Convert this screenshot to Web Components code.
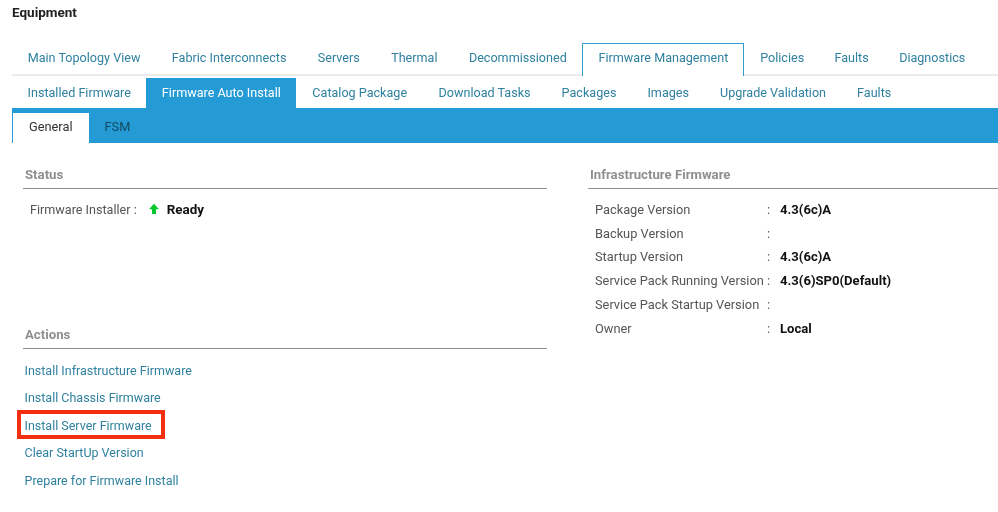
<!DOCTYPE html>
<html><head><meta charset="utf-8"><style>
html,body{margin:0;background:#fff;}
body{font:12.6px Roboto,"Liberation Sans",sans-serif;color:#333;width:998px;height:512px;overflow:hidden;}
</style></head><body>
<fw-page></fw-page>
<script>
const base=`*,*::after{box-sizing:border-box}`;
class FwTab extends HTMLElement{
  constructor(){super();this.attachShadow({mode:'open'}).innerHTML=`<style>${base}
  :host{display:flex;align-items:center;padding:0 var(--pad,15.5px) var(--pb,0) var(--pad,15.5px);color:var(--tc,#2f819f);white-space:nowrap;height:100%;}
  :host([active]){color:var(--ac,#2f819f);background:var(--abg,#fff);border:var(--abd,none);border-bottom:none;padding:0 calc(var(--pad,15.5px) - var(--aw,0px)) var(--apb,var(--pb,0));}
  </style><slot></slot>`;}
}
customElements.define('fw-tab',FwTab);
class FwTabs extends HTMLElement{
  constructor(){super();this.attachShadow({mode:'open'}).innerHTML=`<style>${base}
  :host{display:flex;}
  </style><slot></slot>`;}
}
customElements.define('fw-tabs',FwTabs);
class FwSection extends HTMLElement{
  constructor(){super();this.attachShadow({mode:'open'}).innerHTML=`<style>${base}
  :host{display:block;}
  h3{margin:0;padding:0 0 7px 2px;height:22px;font:700 13.2px/15px Roboto,sans-serif;color:#8f8f8f;border-bottom:1px solid #8f8f8f;}
  </style><h3><slot name="title"></slot></h3><slot></slot>`;}
}
customElements.define('fw-section',FwSection);
class FwRow extends HTMLElement{
  constructor(){super();this.attachShadow({mode:'open'}).innerHTML=`<style>${base}
  :host{display:grid;grid-template-columns:172px 13px auto;height:23.75px;align-items:center;color:#555;font-size:12.8px;}
  b{color:#111;font-weight:700;font-size:13.1px;}
  </style><span><slot name="k"></slot></span><span>:</span><b><slot name="v"></slot></b>`;}
}
customElements.define('fw-row',FwRow);
class FwLink extends HTMLElement{
  constructor(){super();this.attachShadow({mode:'open'}).innerHTML=`<style>${base}
  :host{display:block;height:27.5px;line-height:27.5px;color:#2f819f;position:relative;white-space:nowrap;font-size:12.5px;}
  :host([mark])::after{content:"";position:absolute;left:-8px;top:-2px;width:148px;height:29px;border:4px solid #f2300f;}
  </style><slot></slot>`;}
}
customElements.define('fw-link',FwLink);
class FwPage extends HTMLElement{
  constructor(){super();this.attachShadow({mode:'open'}).innerHTML=`<style>${base}
  :host{display:block;width:998px;height:512px;filter:blur(.3px);}
  .title{font:700 13.5px/14px Roboto,sans-serif;color:#222;padding:5px 0 0 12px;height:43px;}
  .t1{height:33px;margin-left:12px;border-bottom:2px solid #ececec;--pb:3px;--pad:15.7px;}
  .t1 fw-tab[active]{--abd:1px solid #2f9fd0;--aw:.6px;--apb:5px;height:33px;margin-bottom:-2px;background:#fff;}
  .t2{height:30px;margin:2px 0 0 12px;--pb:2px;}
  .t2 fw-tab[active]{--ac:#fff;--abg:#259bd6;}
  .bar{height:35px;margin-left:12px;background:#259bd6;padding:5px 0 0 1px;}
  .bar fw-tab{--pad:16px;--tc:#124a63;--pb:3px;font-size:12.8px;}
  .bar fw-tab[active]{--ac:#333;--abg:#fff;}
  .content{display:grid;grid-template-columns:524px 410px;column-gap:41px;margin-left:23px;padding-top:23.5px;}
  .left{display:flex;flex-direction:column;}
  .status{height:160.5px;}
  .kv{display:flex;align-items:center;padding:9px 0 0 7px;height:32px;color:#555;}
  .arrow{margin:0 7px 0 11px;width:12px;height:12px;display:block;}
  b{color:#111;font-size:13.4px;}
  .rows{padding:9px 0 0 7px;}
  .links{padding:7.5px 0 0 1.5px;}
  </style>
  <div class="title">Equipment</div>
  <fw-tabs class="t1">
    <fw-tab>Main Topology View</fw-tab><fw-tab>Fabric Interconnects</fw-tab><fw-tab>Servers</fw-tab><fw-tab>Thermal</fw-tab><fw-tab>Decommissioned</fw-tab><fw-tab active>Firmware Management</fw-tab><fw-tab>Policies</fw-tab><fw-tab style="--pad:14.7px">Faults</fw-tab><fw-tab>Diagnostics</fw-tab>
  </fw-tabs>
  <fw-tabs class="t2">
    <fw-tab>Installed Firmware</fw-tab><fw-tab active>Firmware Auto Install</fw-tab><fw-tab style="--pad:16px">Catalog Package</fw-tab><fw-tab>Download Tasks</fw-tab><fw-tab>Packages</fw-tab><fw-tab>Images</fw-tab><fw-tab>Upgrade Validation</fw-tab><fw-tab>Faults</fw-tab>
  </fw-tabs>
  <div class="bar"><fw-tabs style="height:30px"><fw-tab active>General</fw-tab><fw-tab>FSM</fw-tab></fw-tabs></div>
  <div class="content">
    <div class="left">
      <fw-section class="status"><span slot="title">Status</span>
        <div class="kv"><span>Firmware Installer :</span>
        <svg class="arrow" viewBox="0 0 12 12"><path d="M6 .8 L11 6.2 H8 V11 H4 V6.2 H1 Z" fill="#06c82e"/></svg><b>Ready</b></div>
      </fw-section>
      <fw-section><span slot="title">Actions</span>
        <div class="links">
          <fw-link>Install Infrastructure Firmware</fw-link>
          <fw-link>Install Chassis Firmware</fw-link>
          <fw-link mark>Install Server Firmware</fw-link>
          <fw-link>Clear StartUp Version</fw-link>
          <fw-link>Prepare for Firmware Install</fw-link>
        </div>
      </fw-section>
    </div>
    <fw-section><span slot="title">Infrastructure Firmware</span>
      <div class="rows">
        <fw-row><span slot="k">Package Version</span><span slot="v">4.3(6c)A</span></fw-row>
        <fw-row><span slot="k">Backup Version</span></fw-row>
        <fw-row><span slot="k">Startup Version</span><span slot="v">4.3(6c)A</span></fw-row>
        <fw-row><span slot="k">Service Pack Running Version</span><span slot="v">4.3(6)SP0(Default)</span></fw-row>
        <fw-row><span slot="k">Service Pack Startup Version</span></fw-row>
        <fw-row><span slot="k">Owner</span><span slot="v">Local</span></fw-row>
      </div>
    </fw-section>
  </div>`;}
}
customElements.define('fw-page',FwPage);
</script></body></html>
